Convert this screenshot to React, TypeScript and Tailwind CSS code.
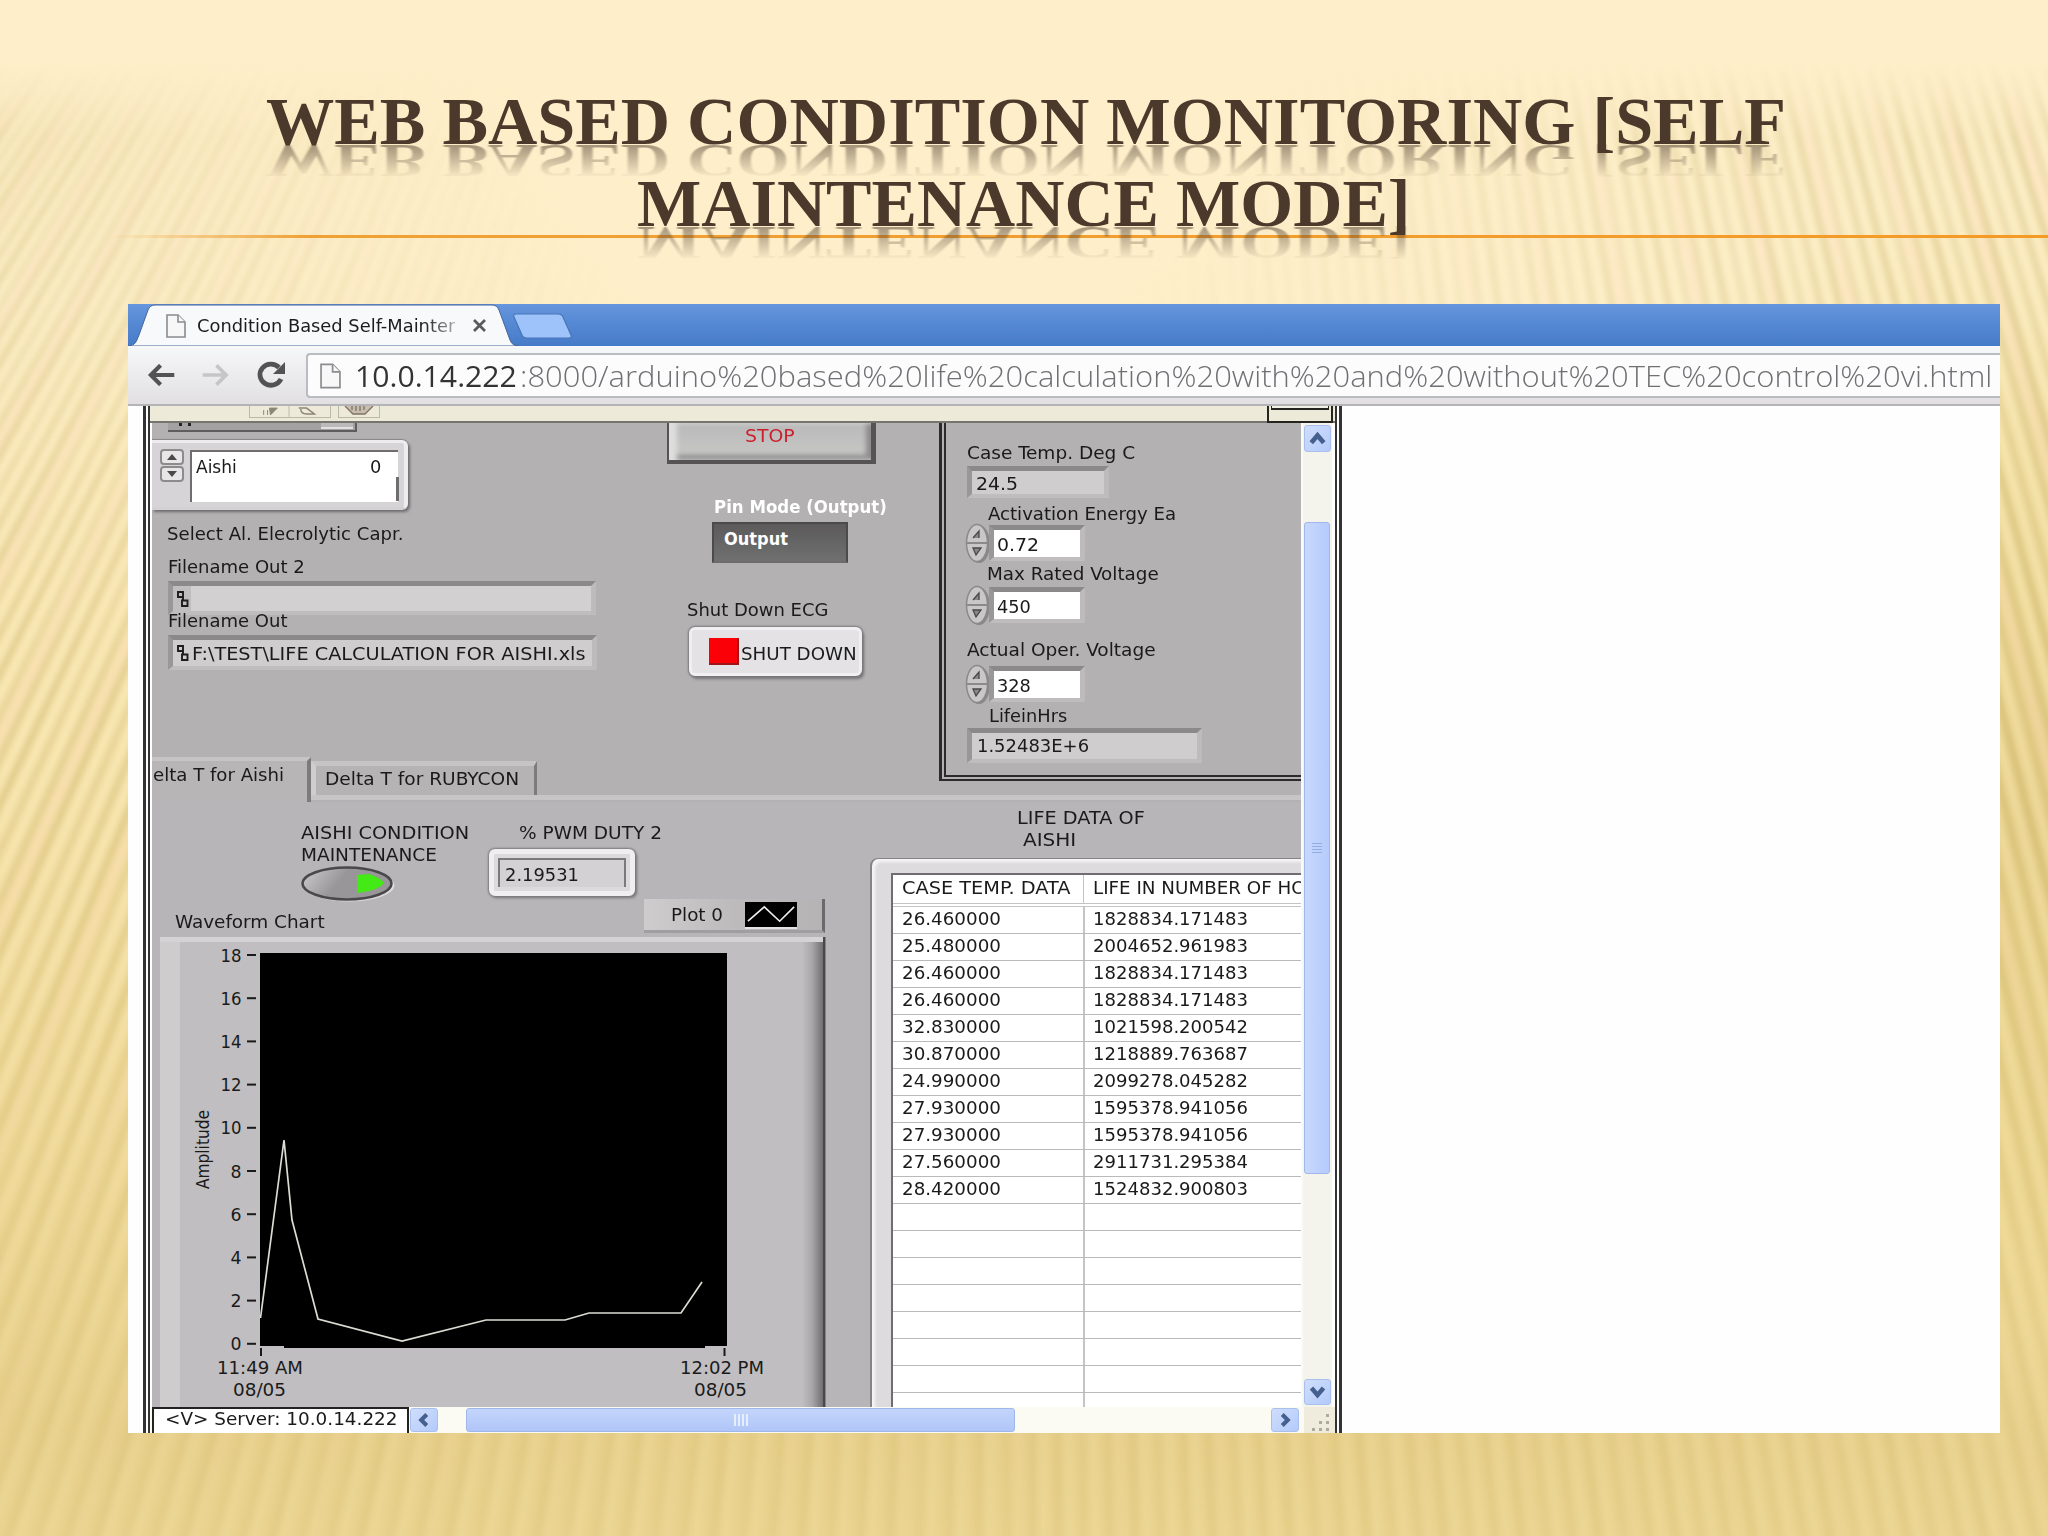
import { useLayoutEffect, useRef, type ReactNode } from "react";

/** One line of text, stretched horizontally to fill the width of its box. */
function Fit({ className = "", children }: { className?: string; children: ReactNode }) {
  const box = useRef<HTMLDivElement>(null);
  const text = useRef<HTMLSpanElement>(null);
  useLayoutEffect(() => {
    if (box.current && text.current) {
      const k = box.current.clientWidth / text.current.offsetWidth;
      text.current.style.transform = `scaleX(${k})`;
    }
  }, []);
  return (
    <div ref={box} className={`shrink-0 whitespace-nowrap ${className}`}>
      <span ref={text} className="inline-block origin-left">
        {children}
      </span>
    </div>
  );
}

const LABEL = "h-5 text-[18px] leading-5 font-['DejaVu_Sans_Condensed','DejaVu_Sans',sans-serif]";

function Label({ className = "", children }: { className?: string; children: ReactNode }) {
  return <Fit className={`${LABEL} ${className}`}>{children}</Fit>;
}

/* Fan of soft light rays behind the slide */
function Rays() {
  const rays: { x: number; k: number; i: number }[] = [];
  for (let i = 0; i < 150; i++) {
    const x = -800 + i * 21.5;
    const k = x < 1000 ? (-0.46 * (1000 - x)) / 960 : (0.23 * (x - 1000)) / 900;
    rays.push({ x, k, i });
  }
  return (
    <svg className="absolute inset-0 h-full w-full" viewBox="0 0 2048 1536" preserveAspectRatio="none">
      <defs>
        <linearGradient id="base" x1="0" y1="0" x2="0" y2="1">
          <stop offset="0" stopColor="#feefca" />
          <stop offset="0.2" stopColor="#feefca" />
          <stop offset="0.42" stopColor="#f8e5b0" />
          <stop offset="0.68" stopColor="#f0da9a" />
          <stop offset="0.93" stopColor="#e7cf8a" />
          <stop offset="1" stopColor="#ead38f" />
        </linearGradient>
        <radialGradient id="right" gradientUnits="userSpaceOnUse" cx="2060" cy="820" r="640">
          <stop offset="0" stopColor="#e3ca82" stopOpacity="0.85" />
          <stop offset="0.6" stopColor="#e9d389" stopOpacity="0.5" />
          <stop offset="1" stopColor="#f6e6a8" stopOpacity="0" />
        </radialGradient>
        <radialGradient id="fade" gradientUnits="userSpaceOnUse" cx="880" cy="60" r="1250" gradientTransform="translate(0 20) scale(1 .85)">
          <stop offset="0.28" stopColor="#000" />
          <stop offset="0.65" stopColor="#aaa" />
          <stop offset="0.9" stopColor="#eee" />
        </radialGradient>
        <linearGradient id="lower" x1="0" y1="0" x2="0" y2="1">
          <stop offset="0.5" stopColor="#000" stopOpacity="0" />
          <stop offset="0.9" stopColor="#000" stopOpacity="0.6" />
        </linearGradient>
        <linearGradient id="top" x1="0" y1="0" x2="0" y2="1">
          <stop offset="0.04" stopColor="#feefca" stopOpacity="1" />
          <stop offset="0.09" stopColor="#feefca" stopOpacity="0" />
        </linearGradient>
        <mask id="m">
          <rect width="2048" height="1536" fill="url(#fade)" />
          <rect width="2048" height="1536" fill="url(#lower)" />
        </mask>
        <filter id="soft" filterUnits="userSpaceOnUse" x="-20" y="-20" width="2088" height="1576">
          <feGaussianBlur stdDeviation="3" />
        </filter>
      </defs>
      <rect width="2048" height="1536" fill="url(#base)" />
      <rect width="2048" height="1536" fill="url(#right)" />
      <g mask="url(#m)">
        <g filter="url(#soft)">
          {rays.map(({ x, k, i }) => (
            <g key={i}>
              <line x1={x - k * 800} y1={-32} x2={x + k * 800} y2={1568} stroke="#bfa856" strokeWidth={8} strokeOpacity={0.28 + (i % 3) * 0.06} />
              <line x1={x + 11 - k * 800} y1={-32} x2={x + 11 + k * 800} y2={1568} stroke={i % 4 ? "#fff0bd" : "#ffdcb8"} strokeWidth={8} strokeOpacity={0.4} />
            </g>
          ))}
        </g>
      </g>
      <rect width="2048" height="1536" fill="url(#top)" />
    </svg>
  );
}

function TitleLine({ text, className }: { text: string; className: string }) {
  return (
    <Fit className={`relative h-[82px] text-[68px] leading-[82px] font-bold text-[#4b392b] font-['Liberation_Serif',serif] ${className}`}>
      <span
        data-text={text}
        className="relative inline-block after:pointer-events-none after:absolute after:top-0 after:left-0 after:origin-[0_64.5px] after:-scale-y-[0.68] after:opacity-50 after:blur-[0.8px] after:content-[attr(data-text)] after:[mask-image:linear-gradient(to_top,transparent_20%,black_22%,transparent_82%)]"
      >
        {text}
      </span>
    </Fit>
  );
}

function DocIcon({ className }: { className: string }) {
  return (
    <svg className={className} viewBox="0 0 20 24" fill="#f7f7f8" stroke="#8b8b90" strokeWidth="1.6">
      <path d="M1 1h11l7 7v15H1z" />
      <path d="M12 1v7h7" />
    </svg>
  );
}

function TabStrip() {
  return (
    <div className="relative flex h-[42px] bg-linear-to-b from-[#6696dd] via-[#5488d3] to-[#467bc9]">
      <svg className="absolute inset-0 h-[42px] w-[460px]" viewBox="0 0 460 42">
        <path d="M0 42C8 41 8 38 11 31L20 6Q22 1 27 1H364Q369 1 371 6L382 36Q384 42 391 42Z" fill="#f8f9fb" stroke="#47649a" strokeWidth="1" />
        <path d="M388 10H430Q434 10 435 13L443 31Q444 34 441 34H399Q395 34 394 31L386 13Q385 10 388 10Z" fill="#9dc3fa" stroke="#4a74b8" strokeWidth="1.2" />
      </svg>
      <DocIcon className="relative mt-[10px] ml-[38px] h-6 w-5" />
      <div className="relative mt-[12px] ml-[11px] [mask-image:linear-gradient(to_right,black_88%,rgba(0,0,0,.35))]">
        <Label className="w-[258px] text-[#1c1c1c]">Condition Based Self-Mainter</Label>
      </div>
      <svg className="relative mt-[15px] ml-[18px] h-[13px] w-[13px]" viewBox="0 0 13 13" stroke="#5a5a5a" strokeWidth="2.8">
        <path d="M1 1l11 11M12 1L1 12" />
      </svg>
    </div>
  );
}

function Toolbar() {
  return (
    <div className="flex h-[60px] border-b-2 border-[#b4b4b6] bg-linear-to-b from-[#f7f8fa] to-[#e1dfe2]">
      <svg className="mt-[18px] ml-[19px] h-[22px] w-[28px]" viewBox="0 0 29 24" fill="none" stroke="#535353" strokeWidth="4.6">
        <path d="M29 12H4M14 1.5L3.5 12L14 22.500" />
      </svg>
      <svg className="mt-[18px] ml-[27px] h-[22px] w-[28px]" viewBox="0 0 29 24" fill="none" stroke="#c6c6c8" strokeWidth="4">
        <path d="M0 12H25M15 1.500L25.500 12L15 22.500" />
      </svg>
      <svg className="mt-[15px] ml-[26px] h-[28px] w-[30px]" viewBox="0 0 30 28" fill="none" stroke="#535353" strokeWidth="4.800">
        <path d="M25 18A11 10.500 0 1 1 23 6.500" />
        <path d="M29 1V13H17Z" fill="#535353" stroke="none" />
      </svg>
      <div className="mt-[7px] ml-[20px] flex h-[45px] flex-1 rounded-l-[4px] border-y-2 border-l-2 border-[#b9bcc0] bg-[#fcfcfd]">
        <DocIcon className="mt-2 ml-[12px] h-[26px] w-[21px]" />
        <div className="ml-[14px] flex h-9 pt-[3px] text-[28.5px] leading-9 font-['Open_Sans','Noto_Sans',sans-serif]">
          <Fit className="w-[162px] text-[#333]">10.0.14.222</Fit>
          <Fit className="ml-[3px] w-[1472px] font-light text-[#6f7073]">
            :8000/arduino%20based%20life%20calculation%20with%20and%20without%20TEC%20control%20vi.html
          </Fit>
        </div>
      </div>
    </div>
  );
}

function AppletBar() {
  return (
    <div className="flex h-[17px] border-b-2 border-[#77756f] bg-[#eeead9]">
      <div className="ml-[99px] flex h-3 w-[82px] border border-t-0 border-[#bdb9a8]">
        <svg className="h-[11px] w-full" viewBox="0 0 82 11" fill="#8c8678" stroke="#8c8678">
          <path d="M14 4v5M18 4v5M20 2h8l-7 7z" />
          <path d="M40 0v11" stroke="#bdb9a8" />
          <path d="M50 2h8l8 6h-8q-6 0-6-5" fill="none" strokeWidth="1.500" />
        </svg>
      </div>
      <div className="ml-[7px] flex h-3 w-[42px] justify-center border border-t-0 border-[#bdb9a8]">
        <svg className="h-[9px] w-[30px]" viewBox="0 0 30 9" fill="#c9bdb0" stroke="#7d7166" strokeWidth="1.300">
          <path d="M1 0L9 8h12l8-8" />
          <path d="M8 0v4M12 0v5M16 0v5M20 0v4" />
        </svg>
      </div>
      <div className="mr-[2px] ml-auto h-[17px] w-[66px] border-x-2 border-b-2 border-[#26241f] px-[2px]">
        <div className="h-[4px] border-x border-b-2 border-[#26241f] bg-[#f3f1e6]" />
      </div>
    </div>
  );
}

const SUNK = "border-t-[5px] border-l-[5px] border-r-[5px] border-b-[4px] border-t-[#8b898a] border-l-[#999798] border-r-[#bdbbbc] border-b-[#bfbdbe]";

function PathIcon() {
  return (
    <svg className="h-4 w-[13px]" viewBox="0 0 13 16" fill="none" stroke="#1d1d1d" strokeWidth="1.900">
      <path d="M2 1h5v5H2zM7 6v3M6 9.500h5.500V15H6z" />
    </svg>
  );
}

function LeftControls() {
  return (
    <div className="flex w-[515px] flex-col">
      <div className="ml-4 flex h-[9px] w-[189px] justify-between border-r-2 border-b-2 border-[#5f5d5e] bg-[#a3a1a2]">
        <div className="ml-[11px] h-[3px] w-[12px] border-x-3 border-[#222]" />
        <div className="mr-[2px] h-[6px] w-[32px] border-b-2 border-[#e2e0e1] bg-[#bbb9ba]" />
      </div>
      <div className="mt-2 flex h-[70px] w-[256px] rounded-r-[6px] border-y-[3px] border-r-4 border-[#eeecee] border-b-[#d3d1d3] bg-[#d6d4d6] shadow-[2px_2px_3px_#6d6b6c,0_-1px_1px_#8a8889]">
        <div className="mt-[6px] ml-[8px] flex w-6 flex-col gap-[1px]">
          <svg className="h-4 w-6 rounded-[4px] border-2 border-[#8d8b8c] bg-[#e8e6e7]" viewBox="0 0 20 12">
            <path d="M5 9l5-6 5 6z" fill="#4b494a" />
          </svg>
          <svg className="h-4 w-6 rounded-[4px] border-2 border-[#8d8b8c] bg-[#e8e6e7]" viewBox="0 0 20 12">
            <path d="M5 3l5 6 5-6z" fill="#4b494a" />
          </svg>
        </div>
        <div className="mt-[7px] ml-[6px] flex h-[52px] w-[208px] justify-between border-t-2 border-l-2 border-[#6f6d6e] bg-white pt-[5px] pr-[17px] pl-[4px]">
          <Label className="w-[41px]">Aishi</Label>
          <Label className="w-[11px]">0</Label>
        </div>
        <div className="mt-[34px] -ml-[2px] h-6 w-[3px] bg-[#6f6d6e]" />
      </div>
      <Label className="mt-[14px] ml-[15px] w-[236px]">Select Al. Elecrolytic Capr.</Label>
      <Label className="mt-[13px] ml-4 w-[137px]">Filename Out 2</Label>
      <div className={`mt-1 ml-4 flex h-[34px] w-[428px] bg-[#d2d0d1] ${SUNK}`}>
        <div className="flex w-[18px] items-center bg-[#c0bebf] pl-[3px]">
          <PathIcon />
        </div>
      </div>
      <Label className="-mt-1 ml-4 w-[119px]">Filename Out</Label>
      <div className={`mt-1 ml-4 flex h-[35px] w-[429px] bg-[#cfcdce] ${SUNK}`}>
        <div className="flex w-[19px] items-center pl-[3px]">
          <PathIcon />
        </div>
        <Label className="mt-[4px] w-[394px]">F:\TEST\LIFE CALCULATION FOR AISHI.xls</Label>
      </div>
    </div>
  );
}

function MiddleControls() {
  return (
    <div className="flex w-[272px] flex-col">
      <div className="flex h-[41px] w-[209px] justify-center border-r-[5px] border-b-[4px] border-l-2 border-[#555354] bg-linear-to-b from-[#b9b9b9] to-[#c9c9c8] shadow-[inset_8px_0_5px_#dedede,inset_-5px_-5px_5px_#8d8b8c]">
        <Label className="mt-[3px] w-[50px] text-[#cc1f2c]">STOP</Label>
      </div>
      <Label className="mt-[33px] ml-[47px] w-[173px] font-bold text-white">Pin Mode (Output)</Label>
      <div className="mt-[5px] ml-[45px] h-[41px] w-[136px] border-2 border-[#4c4a4b] border-b-[#6d6b6c] bg-linear-to-b from-[#5c5a5b] to-[#707071]">
        <Label className="mt-[5px] ml-[10px] w-[64px] font-bold text-white">Output</Label>
      </div>
      <Label className="mt-[37px] ml-5 w-[141px]">Shut Down ECG</Label>
      <div className="mt-[7px] ml-[22px] flex h-[49px] w-[173px] rounded-[6px] border-[3px] border-[#f1eff1] bg-[#e4e2e5] shadow-[0_0_2px_1px_#7a7879,2px_3px_3px_#777576]">
        <div className="mt-[8px] ml-[17px] h-[27px] w-[30px] border-r-2 border-b-2 border-[#9d1518] bg-[#fb0007]" />
        <Label className="mt-[14px] ml-[2px] w-[116px]">SHUT DOWN</Label>
      </div>
    </div>
  );
}

function Spin({ value, className, width }: { value: string; className: string; width: string }) {
  return (
    <div className={`flex h-10 ${className}`}>
      <svg className="h-10 w-[26px]" viewBox="0 0 26 40">
        <ellipse cx="14" cy="21" rx="11" ry="19" fill="#8a8889" />
        <ellipse cx="12" cy="20" rx="10.500" ry="18.500" fill="#c9c7c8" stroke="#8b898a" strokeWidth="1.500" />
        <path d="M1 20h22" stroke="#8b898a" strokeWidth="2" />
        <path d="M8 15l6-7v7M8 25h8l-5 7z" fill="#8a8889" stroke="#4a4849" strokeWidth="1.300" />
      </svg>
      <div className={`-ml-[2px] mt-[2px] h-9 w-[96px] bg-white ${SUNK}`}>
        <Label className={`mt-[5px] ml-[3px] ${width}`}>{value}</Label>
      </div>
    </div>
  );
}

function ReadingsBox() {
  return (
    <div className="h-[358px] flex-1 border-b-2 border-l-[3px] border-[#2c2a2b] pb-[2px] pl-[2px]">
      <div className="flex h-full flex-col border-b-2 border-l-[2px] border-[#2c2a2b] pl-[1px]">
        <Label className="mt-5 ml-5 w-[168px]">Case Temp. Deg C</Label>
        <div className={`mt-[3px] ml-5 h-8 w-[142px] bg-[#cfcdce] ${SUNK}`}>
          <Label className="mt-[3px] ml-[4px] w-[42px]">24.5</Label>
        </div>
        <Label className="mt-[6px] ml-[41px] w-[188px]">Activation Energy Ea</Label>
        <Spin value="0.72" width="w-[42px]" className="-mt-[1px] ml-[18px]" />
        <Label className="mt-[1px] ml-10 w-[172px]">Max Rated Voltage</Label>
        <Spin value="450" width="w-[34px]" className="mt-[1px] ml-[18px]" />
        <Label className="mt-[15px] ml-5 w-[189px]">Actual Oper. Voltage</Label>
        <Spin value="328" width="w-[34px]" className="mt-[4px] ml-[18px]" />
        <Label className="mt-[2px] ml-[42px] w-[78px]">LifeinHrs</Label>
        <div className={`mt-[2px] ml-5 h-[35px] w-[235px] bg-[#cfcdce] ${SUNK}`}>
          <Label className="mt-[3px] ml-[5px] w-[112px]">1.52483E+6</Label>
        </div>
      </div>
    </div>
  );
}

function TabHeads() {
  return (
    <div className="flex h-[45px]">
      <div className="h-[45px] w-[159px] border-t-[4px] border-r-4 border-t-[#c6c4c5] border-r-[#7d7b7c] bg-[#b7b5b6]">
        <Label className="mt-1 ml-[1px] w-[131px]">elta T for Aishi</Label>
      </div>
      <div className="flex flex-1 flex-col pt-1">
        <div className="h-[34px] w-[226px] border-t-[5px] border-r-[3px] border-l-[5px] border-t-[#c6c4c5] border-r-[#7d7b7c] border-l-[#cfcdce] bg-[#b5b3b4]">
          <Label className="mt-[3px] ml-[9px] w-[194px]">Delta T for RUBYCON</Label>
        </div>
        <div className="h-[5px] bg-[#c7c5c6]" />
      </div>
    </div>
  );
}

const TICKS = [18, 16, 14, 12, 10, 8, 6, 4, 2, 0];

function WaveformChart() {
  return (
    <svg
      className="ml-2 block h-[470px] w-[668px] font-['DejaVu_Sans_Condensed','DejaVu_Sans',sans-serif] text-[17.500px]"
      viewBox="160 937 668 470"
      fill="#1a1a1a"
    >
      <defs>
        <linearGradient id="edge">
          <stop offset="0" stopColor="#c0bec0" />
          <stop offset="0.450" stopColor="#a9a7a9" />
          <stop offset="1" stopColor="#6b696b" />
        </linearGradient>
      </defs>
      <rect x="160" y="937" width="666" height="470" fill="#c0bec0" />
      <rect x="160" y="937" width="20" height="470" fill="#cecccd" />
      <rect x="160" y="937" width="664" height="5" fill="#d4d2d4" />
      <rect x="802" y="942" width="22" height="465" fill="url(#edge)" />
      <rect x="823" y="937" width="2.500" height="470" fill="#4a484a" />
      <path d="M260 953H727V1346H705V1348H284V1346H260Z" fill="#000" />
      {TICKS.map((t, i) => (
        <g key={t}>
          <rect x="247" y={954 + i * 43.2} width="9" height="2" />
          <text x="241.500" y={961.5 + i * 43.2} textAnchor="end" textLength={t > 9 ? 21 : 11} lengthAdjust="spacingAndGlyphs">
            {t}
          </text>
        </g>
      ))}
      <text transform="translate(209 1189) rotate(-90)" textLength="79" lengthAdjust="spacingAndGlyphs">Amplitude</text>
      <rect x="260" y="1348" width="2" height="8" />
      <rect x="723.500" y="1348" width="2" height="8" />
      <text x="217" y="1374" textLength="86" lengthAdjust="spacingAndGlyphs">11:49 AM</text>
      <text x="233" y="1396" textLength="53" lengthAdjust="spacingAndGlyphs">08/05</text>
      <text x="680" y="1374" textLength="84" lengthAdjust="spacingAndGlyphs">12:02 PM</text>
      <text x="694" y="1396" textLength="53" lengthAdjust="spacingAndGlyphs">08/05</text>
      <polyline
        points="260.500,1318 284,1140 292,1220 318,1319 402,1341 486,1320 565,1320 589,1313 681,1313 702,1282"
        fill="none"
        stroke="#dcdcd4"
        strokeWidth="1.700"
      />
    </svg>
  );
}

function LeftPage() {
  return (
    <div className="flex w-[718px] flex-col">
      <div className="flex h-[97px] pt-[21px]">
        <div className="ml-[149px] w-[188px]">
          <Label className="w-[168px]">AISHI CONDITION</Label>
          <Label className="mt-[2px] w-[136px]">MAINTENANCE</Label>
          <svg className="mt-[1px] h-9 w-[94px]" viewBox="0 0 94 36">
            <defs>
              <linearGradient id="oval" x1="0" y1="0" x2="1" y2="0.300">
                <stop offset="0" stopColor="#cfcdcf" />
                <stop offset="0.500" stopColor="#989698" />
              </linearGradient>
            </defs>
            <ellipse cx="48" cy="19.500" rx="45.500" ry="16" fill="#dddbdd" />
            <ellipse cx="46" cy="17.500" rx="44.500" ry="16" fill="url(#oval)" stroke="#4a484a" strokeWidth="2.600" />
            <path d="M56 9L68 8Q80 12 83 17Q78 23 68 25L57 27Z" fill="#43ea16" />
          </svg>
        </div>
        <div>
          <Label className="ml-[30px] w-[143px]">% PWM DUTY 2</Label>
          <div className="mt-[6px] h-[47px] w-[146px] rounded-[6px] border-[5px] border-[#f0eef0] bg-[#dcdadc] p-[4px] shadow-[0_0_2px_1px_#7c7a7c,2px_2px_3px_#7c7a7c]">
            <div className="h-full border-t-2 border-r-2 border-l-2 border-[#7b797b] bg-[#d3d1d3]">
              <Label className="mt-[5px] ml-[5px] w-[74px]">2.19531</Label>
            </div>
          </div>
        </div>
      </div>
      <div className="flex h-[38px]">
        <Label className="mt-[13px] ml-[23px] w-[150px]">Waveform Chart</Label>
        <div className="ml-[319px] flex h-[34px] w-[181px] border-r-[3px] border-b-[3px] border-r-[#6b696b] border-b-[#a09ea0] bg-linear-to-r from-[#cecccd] via-[#bdbbbc] to-[#b5b3b4]">
          <Label className="mt-[6px] ml-[27px] w-[52px]">Plot 0</Label>
          <svg className="mt-[3px] ml-[22px] h-[27px] w-[52px] border-b-2 border-[#e4e2e4] bg-black" viewBox="0 0 52 26" fill="none" stroke="#eee" strokeWidth="1.700">
            <path d="M2 20L19 5L35 20L50 5" />
          </svg>
        </div>
      </div>
      <WaveformChart />
    </div>
  );
}

const DATA: [string, string][] = [
  ["26.460000", "1828834.171483"],
  ["25.480000", "2004652.961983"],
  ["26.460000", "1828834.171483"],
  ["26.460000", "1828834.171483"],
  ["32.830000", "1021598.200542"],
  ["30.870000", "1218889.763687"],
  ["24.990000", "2099278.045282"],
  ["27.930000", "1595378.941056"],
  ["27.930000", "1595378.941056"],
  ["27.560000", "2911731.295384"],
  ["28.420000", "1524832.900803"],
  ["", ""],
  ["", ""],
  ["", ""],
  ["", ""],
  ["", ""],
  ["", ""],
  ["", ""],
  ["", ""],
];

const CELL = "h-5 text-[17px] leading-5 font-['DejaVu_Sans',sans-serif]";

function LifeTable() {
  return (
    <div className="flex flex-1 flex-col overflow-hidden">
      <Fit className={`mt-[6px] ml-[147px] w-[128px] ${CELL}`}>LIFE DATA OF</Fit>
      <Fit className={`mt-[2px] ml-[153px] w-[53px] ${CELL}`}>AISHI</Fit>
      <div className="mt-2 h-[549px] rounded-tl-[8px] border-t border-l-2 border-[#858385] bg-[#dddbdd] pt-[14px] pl-[19px] shadow-[inset_3px_3px_3px_#f6f4f6]">
        <div className="h-full overflow-hidden border-t-2 border-l-2 border-[#6f6d6f] bg-white">
          <div className="flex h-[28px]">
            <div className="w-[191px] shrink-0 border-r border-[#c4c4c4] pt-[3px] pl-[9px]">
              <Fit className={`w-[168px] ${CELL}`}>CASE TEMP. DATA</Fit>
            </div>
            <div className="shrink-0 pt-[3px] pl-[9px]">
              <Fit className={`w-[213px] ${CELL}`}>LIFE IN NUMBER OF HO</Fit>
            </div>
          </div>
          <div className="h-[4px] border-y border-[#c4c4c4]" />
          {DATA.map(([temp, life], i) => (
            <div key={i} className="flex h-[27.030px] border-b-[1.500px] border-[#bababa]">
              <div className="w-[192px] shrink-0 border-r-2 border-[#c4c4c4] pt-[1.500px] pl-[9px]">
                {temp && <Fit className={`w-[99px] ${CELL}`}>{temp}</Fit>}
              </div>
              <div className="pt-[1.500px] pl-[8px]">{life && <Fit className={`w-[155px] ${CELL}`}>{life}</Fit>}</div>
            </div>
          ))}
        </div>
      </div>
    </div>
  );
}

function ScrollButton({ d, className }: { d: string; className: string }) {
  return (
    <svg
      className={`rounded-[3px] border border-[#a9c0ee] bg-linear-to-br from-[#d0defc] to-[#b3cafa] ${className}`}
      viewBox="0 0 24 24"
      fill="none"
      stroke="#45608f"
      strokeWidth="4.500"
    >
      <path d={d} />
    </svg>
  );
}

function VerticalBar() {
  return (
    <div className="flex w-[31px] flex-col items-center border-l-2 border-[#fbfbf5] bg-[#f5f4ec] pr-[1px]">
      <ScrollButton d="M6 16l6-7 6 7" className="mt-[2px] h-[27px] w-[27px]" />
      <div className="mt-[70px] flex h-[652px] w-[26px] flex-col items-center justify-center gap-[2px] rounded-[3px] border border-[#9fb7ea] bg-linear-to-r from-[#c8d8fd] to-[#b5cbfb]">
        <div className="h-[1px] w-[10px] bg-[#93aee6]" />
        <div className="h-[1px] w-[10px] bg-[#93aee6]" />
        <div className="h-[1px] w-[10px] bg-[#93aee6]" />
        <div className="h-[1px] w-[10px] bg-[#93aee6]" />
      </div>
      <ScrollButton d="M6 8l6 7 6-7" className="mt-[205px] h-[26px] w-[27px]" />
    </div>
  );
}

function BottomBar() {
  return (
    <div className="flex h-[26px] bg-[#fbfaf3]">
      <div className="ml-[2px] h-[26px] w-[257px] border-x-2 border-t-2 border-[#222] bg-white">
        <Label className="ml-[11px] w-[233px]">{"<V> Server: 10.0.14.222"}</Label>
      </div>
      <ScrollButton d="M15 6l-6 6 6 6" className="mt-[1px] ml-[1px] h-[24px] w-[28px]" />
      <div className="mt-[1px] ml-[28px] flex h-[24px] w-[549px] items-center justify-center gap-[2px] rounded-[3px] border border-[#9fb7ea] bg-linear-to-b from-[#c4d5fc] to-[#b0c6f8]">
        <div className="h-3 w-[2px] bg-[#e6eefe]" />
        <div className="h-3 w-[2px] bg-[#e6eefe]" />
        <div className="h-3 w-[2px] bg-[#e6eefe]" />
        <div className="h-3 w-[2px] bg-[#e6eefe]" />
      </div>
      <ScrollButton d="M9 6l6 6-6 6" className="mt-[1px] ml-auto h-[24px] w-[28px]" />
      <svg className="ml-[5px] h-[26px] w-[31px] bg-[#efecde]" viewBox="0 0 31 26" fill="#b0ab98">
        <path d="M22 7h3v3h-3zM22 14h3v3h-3zM22 21h3v3h-3zM15 14h3v3h-3zM15 21h3v3h-3zM8 21h3v3h-3z" />
      </svg>
    </div>
  );
}

export default function App() {
  return (
    <div className="relative h-[1536px] w-[2048px] overflow-hidden bg-[#feefca] text-[#1a1a1a]">
      <Rays />
      <div className="absolute top-[235px] left-[110px] h-[3px] w-[1938px] bg-linear-to-r from-transparent via-[#f0a136] via-10% to-[#f59a25]" />
      <header className="relative h-[304px] pt-[80px]">
        <TitleLine className="ml-[266px] w-[1520px]" text="WEB BASED CONDITION MONITORING [SELF" />
        <TitleLine className="ml-[637px] w-[774px]" text="MAINTENANCE MODE]" />
      </header>
      <main className="relative ml-[128px] flex h-[1129px] w-[1872px] flex-col bg-[#fefefe]">
        <TabStrip />
        <Toolbar />
        <div className="flex flex-1 pl-[15px]">
          <div className="flex h-[1027px] w-[1199px] border-x-[3px] border-[#333] px-[2px]">
            <div className="flex flex-1 flex-col border-x-2 border-[#333]">
              <AppletBar />
              <div className="flex h-[984px]">
                <div className="ml-[2px] flex w-[1149px] flex-col overflow-hidden bg-[#b3b1b2]">
                  <div className="flex h-[334px]">
                    <LeftControls />
                    <MiddleControls />
                    <ReadingsBox />
                  </div>
                  <TabHeads />
                  <div className="flex flex-1 bg-[#b7b5b7]">
                    <LeftPage />
                    <LifeTable />
                  </div>
                </div>
                <VerticalBar />
              </div>
              <BottomBar />
            </div>
          </div>
        </div>
      </main>
    </div>
  );
}
